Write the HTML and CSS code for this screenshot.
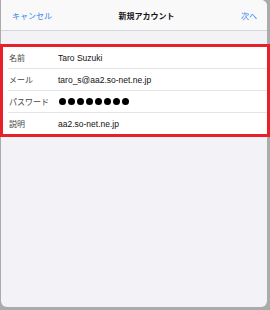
FILE: index.html
```html
<!DOCTYPE html>
<html>
  <head>
    <title>新規アカウント</title>
    <link rel="stylesheet" href="styles.css">
  </head>
  <body>
    <div class="sheet">
      <div class="nav">
        <span class="nav-link">キャンセル</span>
        <span class="nav-title">新規アカウント</span>
        <span class="nav-link">次へ</span>
      </div>

      <div class="form">
        <div class="row">
          <span class="label">名前</span>
          <span class="value">Taro Suzuki</span>
        </div>
        <div class="row">
          <span class="label">メール</span>
          <span class="value">taro_s@aa2.so-net.ne.jp</span>
        </div>
        <div class="row">
          <span class="label">パスワード</span>
          <span class="dots">
            <i></i><i></i><i></i><i></i><i></i><i></i><i></i><i></i>
          </span>
        </div>
        <div class="row">
          <span class="label">説明</span>
          <span class="value">aa2.so-net.ne.jp</span>
        </div>
      </div>
    </div>
  </body>
</html>
```

FILE: styles.css
```css
body {
  margin: 0;
  background-color: #ababab;
  font-family: "Liberation Sans", "Noto Sans CJK JP", sans-serif;
}
.sheet {
  width: 266px;
  height: 307px;
  margin-left: 1px;
  background-color: #f2f2f7;
  border-radius: 0 6px 6px 6px;
}
.nav {
  display: flex;
  justify-content: space-between;
  align-items: center;
  height: 30px;
  padding: 0 10px 0 11px;
  background-color: #f9f9f9;
  border-bottom: 1px solid #d6d6da;
  border-top-right-radius: 6px;
  font-size: 8px;
}
.nav-link {
  color: #2f86f0;
}
.nav-title {
  font-weight: bold;
  color: #111;
}
.form {
  margin: 13px -3px 0 -1px;
  background-color: #fff;
  border: 3px solid #e8202a;
}
.row {
  display: flex;
  align-items: center;
  height: 21px;
  margin-left: 5px;
  border-bottom: 1px solid #e4e4e8;
}
.row:last-child {
  border-bottom: none;
}
.label {
  width: 49px;
  padding-left: 1px;
  font-size: 8px;
  color: #444;
}
.value {
  font-size: 8.5px;
  color: #111;
}
.dots {
  display: flex;
  gap: 2px;
  margin-left: 1px;
}
.dots i {
  width: 7px;
  height: 7px;
  border-radius: 50%;
  background-color: #000;
}
```
